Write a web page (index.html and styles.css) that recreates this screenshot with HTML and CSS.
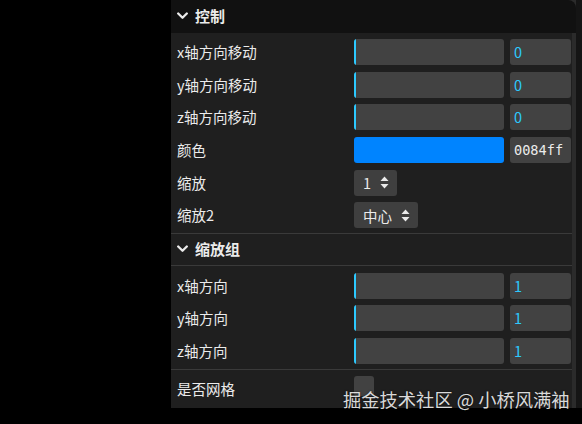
FILE: index.html
```html
<!DOCTYPE html>
<html lang="zh-CN">
<head>
  <meta charset="UTF-8" />
  <meta name="viewport" content="width=device-width, initial-scale=1.0"/>
  <title>lil-gui 控制面板</title>
  <link rel="stylesheet" href="styles.css">
</head>
<body>

  <div class="stage">
    <div class="left-space"></div>

    <div class="gui-wrap">
      <div class="gui">
        <div class="title">
          <svg class="chevron" width="11" height="8" viewBox="0 0 11 8"><polyline points="1.2,1.5 5.5,5.8 9.8,1.5" /></svg>
          <span>控制</span>
        </div>

        <div class="children">
          <div class="controller">
            <div class="name">x轴方向移动</div>
            <div class="widget">
              <div class="slider"><div class="fill"></div></div>
              <div class="number">0</div>
            </div>
          </div>
          <div class="controller">
            <div class="name">y轴方向移动</div>
            <div class="widget">
              <div class="slider"><div class="fill"></div></div>
              <div class="number">0</div>
            </div>
          </div>
          <div class="controller">
            <div class="name">z轴方向移动</div>
            <div class="widget">
              <div class="slider"><div class="fill"></div></div>
              <div class="number">0</div>
            </div>
          </div>
          <div class="controller">
            <div class="name">颜色</div>
            <div class="widget">
              <div class="swatch"></div>
              <div class="hex">0084ff</div>
            </div>
          </div>
          <div class="controller">
            <div class="name">缩放</div>
            <div class="widget">
              <div class="select">
                <span>1</span>
                <svg class="updown" width="9" height="13" viewBox="0 0 9 13"><polygon points="4.5,0.5 8.5,5 0.5,5" /><polygon points="0.5,8 8.5,8 4.5,12.5" /></svg>
              </div>
            </div>
          </div>
          <div class="controller">
            <div class="name">缩放2</div>
            <div class="widget">
              <div class="select">
                <span>中心</span>
                <svg class="updown" width="9" height="13" viewBox="0 0 9 13"><polygon points="4.5,0.5 8.5,5 0.5,5" /><polygon points="0.5,8 8.5,8 4.5,12.5" /></svg>
              </div>
            </div>
          </div>

          <!-- 子文件夹 -->
          <div class="folder">
            <div class="title sub">
              <svg class="chevron" width="11" height="8" viewBox="0 0 11 8"><polyline points="1.2,1.5 5.5,5.8 9.8,1.5" /></svg>
              <span>缩放组</span>
            </div>
            <div class="children sub-children">
              <div class="controller tight">
                <div class="name">x轴方向</div>
                <div class="widget">
                  <div class="slider"><div class="fill"></div></div>
                  <div class="number">1</div>
                </div>
              </div>
              <div class="controller tight">
                <div class="name">y轴方向</div>
                <div class="widget">
                  <div class="slider"><div class="fill"></div></div>
                  <div class="number">1</div>
                </div>
              </div>
              <div class="controller tight">
                <div class="name">z轴方向</div>
                <div class="widget">
                  <div class="slider"><div class="fill"></div></div>
                  <div class="number">1</div>
                </div>
              </div>
            </div>
          </div>

          <div class="controller after-folder">
            <div class="name">是否网格</div>
            <div class="widget">
              <div class="checkbox"></div>
            </div>
          </div>
        </div>
      </div>
      <div class="watermark">掘金技术社区 @ 小桥风满袖</div>
    </div>

    <div class="right-space"></div>
  </div>

</body>
</html>
```

FILE: styles.css
```css
body {
  margin: 0;
  padding: 0;
  background: #000;
  font-family: "Noto Sans CJK SC", "Noto Sans", sans-serif;
  color: #ebebeb;
  overflow: hidden;
}

.stage {
  display: flex;
  width: 582px;
  height: 424px;
}

.left-space {
  width: 171px;
  flex: none;
}

.right-space {
  flex: 1;
  height: 408px;
  background: #151515;
}

.gui-wrap {
  position: relative;
  width: 405px;
  height: 408px;
  background: #2b2b2b;
}

.gui {
  width: 405px;
  height: 408px;
  display: flex;
  flex-direction: column;
}

.title {
  display: flex;
  align-items: center;
  gap: 7px;
  height: 33px;
  padding-left: 6px;
  padding-bottom: 2px;
  box-sizing: border-box;
  background: #111;
  border-top-right-radius: 8px;
  font-size: 15px;
  font-weight: bold;
  color: #ebebeb;
}

.chevron polyline {
  fill: none;
  stroke: #ebebeb;
  stroke-width: 2.3;
  stroke-linecap: round;
  stroke-linejoin: round;
}

.children {
  flex: 1;
  width: 401px;
  background: #1f1f1f;
  padding-top: 3px;
  box-sizing: border-box;
}

.controller {
  display: flex;
  align-items: center;
  height: 32.6px;
  padding-left: 6px;
  padding-right: 1px;
}

.controller.tight {
  height: 32.2px;
}

.name {
  width: 177px;
  flex: none;
  font-size: 14.5px;
  white-space: nowrap;
  margin-top: -1px;
}

.widget {
  flex: 1;
  display: flex;
  gap: 6px;
  height: 26px;
}

.slider {
  position: relative;
  width: 150px;
  height: 26px;
  background: #424242;
  border-radius: 3px;
  overflow: hidden;
}

.slider .fill {
  width: 2px;
  height: 100%;
  background: #2cc9ff;
}

.number, .hex {
  flex: 1;
  height: 26px;
  background: #424242;
  border-radius: 3px;
  padding-left: 4px;
  line-height: 26px;
  font-size: 14.5px;
  color: #2cc9ff;
}

.hex {
  color: #ebebeb;
  font-family: "DejaVu Sans Mono", "Liberation Mono", monospace;
  font-size: 13.6px;
}

.swatch {
  width: 150px;
  height: 26px;
  background: #0084ff;
  border-radius: 3px;
}

.select {
  display: flex;
  align-items: center;
  gap: 9px;
  height: 26px;
  padding: 0 8px 0 9px;
  background: #3f3f3f;
  border-radius: 3px;
  font-size: 14.5px;
}

.updown polygon {
  fill: #ebebeb;
}

.folder {
  margin-top: 1px;
}

.title.sub {
  background: transparent;
  border-radius: 0;
  border-top: 1px solid #3a3a3a;
  border-bottom: 1px solid #3a3a3a;
  height: 33px;
  padding-bottom: 1px;
  font-size: 15px;
}

.sub-children {
  padding-top: 4.5px;
  padding-bottom: 2.5px;
  width: auto;
}

.controller.after-folder {
  border-top: 1px solid #3a3a3a;
  height: 33px;
  padding-top: 2px;
}

.checkbox {
  width: 20px;
  height: 20px;
  background: #424242;
  border-radius: 3px;
  margin-top: 0;
}

.watermark {
  position: absolute;
  left: 172px;
  top: 386px;
  font-size: 18.3px;
  color: rgba(255, 255, 255, 0.85);
  text-shadow: 0 0 2px rgba(0, 0, 0, 0.6);
  white-space: nowrap;
}
```
